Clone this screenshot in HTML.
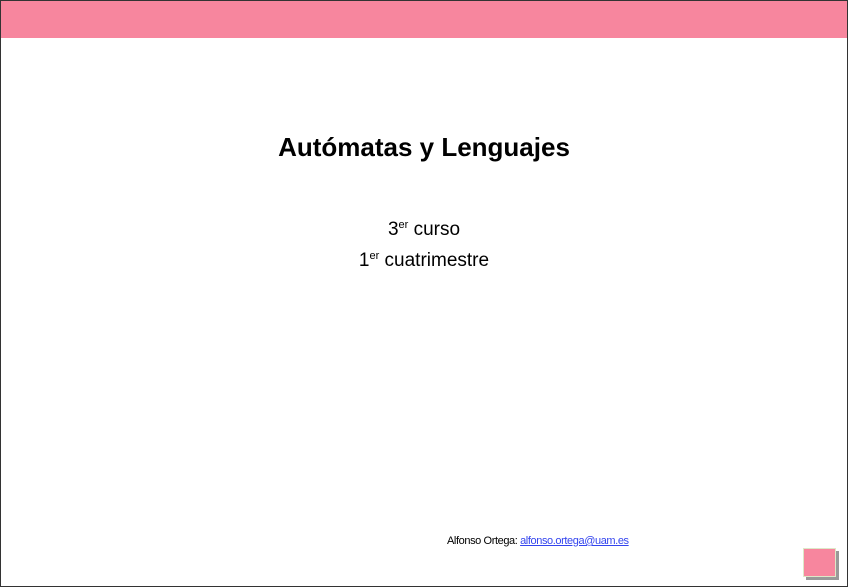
<!DOCTYPE html>
<html><head><meta charset="utf-8"><style>
html,body{margin:0;padding:0;}
body{width:848px;height:587px;position:relative;background:#fff;font-family:"Liberation Sans",sans-serif;overflow:hidden;}
.frame{position:absolute;left:0;top:0;width:846px;height:585px;border:1px solid #333;}
.band{position:absolute;left:1px;top:1px;width:846px;height:37px;background:#f7869e;}
.t{position:absolute;left:0;width:848px;text-align:center;color:#000;white-space:nowrap;}
sup{font-size:11px;vertical-align:7px;}
.a{position:absolute;left:447px;top:535px;font-size:11px;letter-spacing:-0.4px;color:#000;}
.a span{color:#3344ee;text-decoration:underline;}
.sh{position:absolute;left:806px;top:551px;width:33px;height:29px;background:#999;}
.bx{position:absolute;left:803px;top:548px;width:31px;height:27px;background:#f7869e;border:1px solid #dde8c8;}
</style></head><body>
<div class="frame"></div>
<div class="band"></div>
<div class="t" style="top:132px;font-size:26px;font-weight:bold;">Autómatas y Lenguajes</div>
<div class="t" style="top:219px;font-size:19px;">3<sup>er</sup> curso</div>
<div class="t" style="top:250px;font-size:19px;">1<sup>er</sup> cuatrimestre</div>
<div class="a">Alfonso Ortega: <span>alfonso.ortega@uam.es</span></div>
<div class="sh"></div>
<div class="bx"></div>
</body></html>
